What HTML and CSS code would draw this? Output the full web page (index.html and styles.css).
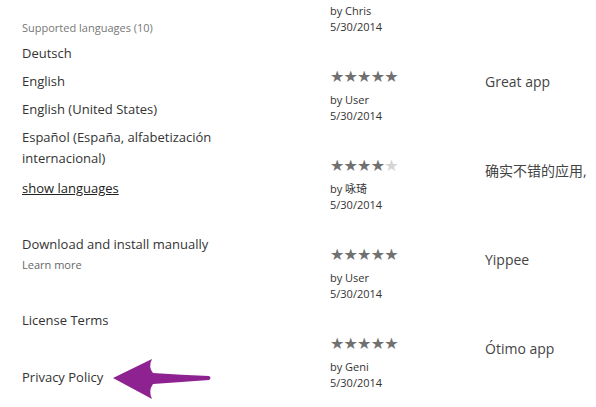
FILE: index.html
```html
<!DOCTYPE html>
<html>
<head>
<meta charset="utf-8">
<link rel="stylesheet" href="styles.css">
</head>
<body>
<div class="page">
  <div class="left">
    <div class="caption">Supported languages (10)</div>
    <ul class="langs">
      <li>Deutsch</li>
      <li>English</li>
      <li>English (United States)</li>
      <li class="wrap">Español (España, alfabetización internacional)</li>
    </ul>
    <a class="show">show languages</a>
    <div class="block download">
      <div class="item">Download and install manually</div>
      <div class="sub">Learn more</div>
    </div>
    <div class="block license"><div class="item">License Terms</div></div>
    <div class="block privacy"><div class="item">Privacy Policy</div></div>
  </div>
  <div class="right">
    <div class="reviews">
      <div class="review first">
        <div class="meta">
          <div class="stars">★★★★★</div>
          <div class="by">by Chris</div>
          <div class="date">5/30/2014</div>
        </div>
        <div class="title">Nice app</div>
      </div>
      <div class="review">
        <div class="meta">
          <div class="stars">★★★★★</div>
          <div class="by">by User</div>
          <div class="date">5/30/2014</div>
        </div>
        <div class="title">Great app</div>
      </div>
      <div class="review">
        <div class="meta">
          <div class="stars">★★★★<span class="off">★</span></div>
          <div class="by">by 咏琦</div>
          <div class="date">5/30/2014</div>
        </div>
        <div class="title">确实不错的应用,</div>
      </div>
      <div class="review">
        <div class="meta">
          <div class="stars">★★★★★</div>
          <div class="by">by User</div>
          <div class="date">5/30/2014</div>
        </div>
        <div class="title">Yippee</div>
      </div>
      <div class="review">
        <div class="meta">
          <div class="stars">★★★★★</div>
          <div class="by">by Geni</div>
          <div class="date">5/30/2014</div>
        </div>
        <div class="title">Ótimo app</div>
      </div>
    </div>
  </div>
  <svg class="arrow" width="110" height="46" viewBox="0 0 110 46">
    <path d="M1 21 L40 2 Q36 10 41 16 Q70 18 97 19 Q100 21 97 23 Q70 25 41 27 Q36 34 40 42 Z" fill="#8f2291"/>
  </svg>
</div>
</body>
</html>
```
FILE: styles.css
```css
html, body { margin: 0; padding: 0; background: #fff; }
body { font-family: "Open Sans", "Noto Sans CJK SC", sans-serif; color: #333; }
.page { position: relative; width: 596px; height: 407px; overflow: hidden; display: flex; }
.left { width: 308px; padding-left: 22px; box-sizing: border-box; }
.caption { font-size: 11px; color: #777; margin-top: 20px; line-height: 16px; }
.langs { list-style: none; margin: 7px 0 0; padding: 0; font-size: 13px; }
.langs li { line-height: 21px; margin-bottom: 7px; }
.langs li.wrap { width: 210px; }
.show { display: block; font-size: 13px; line-height: 21px; text-decoration: underline; color: #222; margin-top: 9px; }
.block { font-size: 13px; }
.item { line-height: 21px; }
.download { margin-top: 35px; }
.sub { font-size: 11px; color: #666; line-height: 16px; margin-top: 2px; }
.license { margin-top: 37px; }
.privacy { margin-top: 36px; }
.right { flex: 1; }
.reviews { margin-top: -21px; margin-left: 22px; }
.review { display: flex; height: 89px; }
.meta { width: 155px; }
.stars { font-family: "DejaVu Sans", sans-serif; font-size: 16px; letter-spacing: -0.8px; color: #707070; line-height: 18px; }
.stars .off { color: #d4d4d4; }
.by, .date { font-size: 11px; line-height: 16px; color: #333; }
.by { margin-top: 6px; }
.title { font-size: 14px; color: #444; line-height: 20px; margin-top: 4px; }
.first .title { margin-top: -6px; }
.arrow { position: absolute; left: 112px; top: 357px; }
```
